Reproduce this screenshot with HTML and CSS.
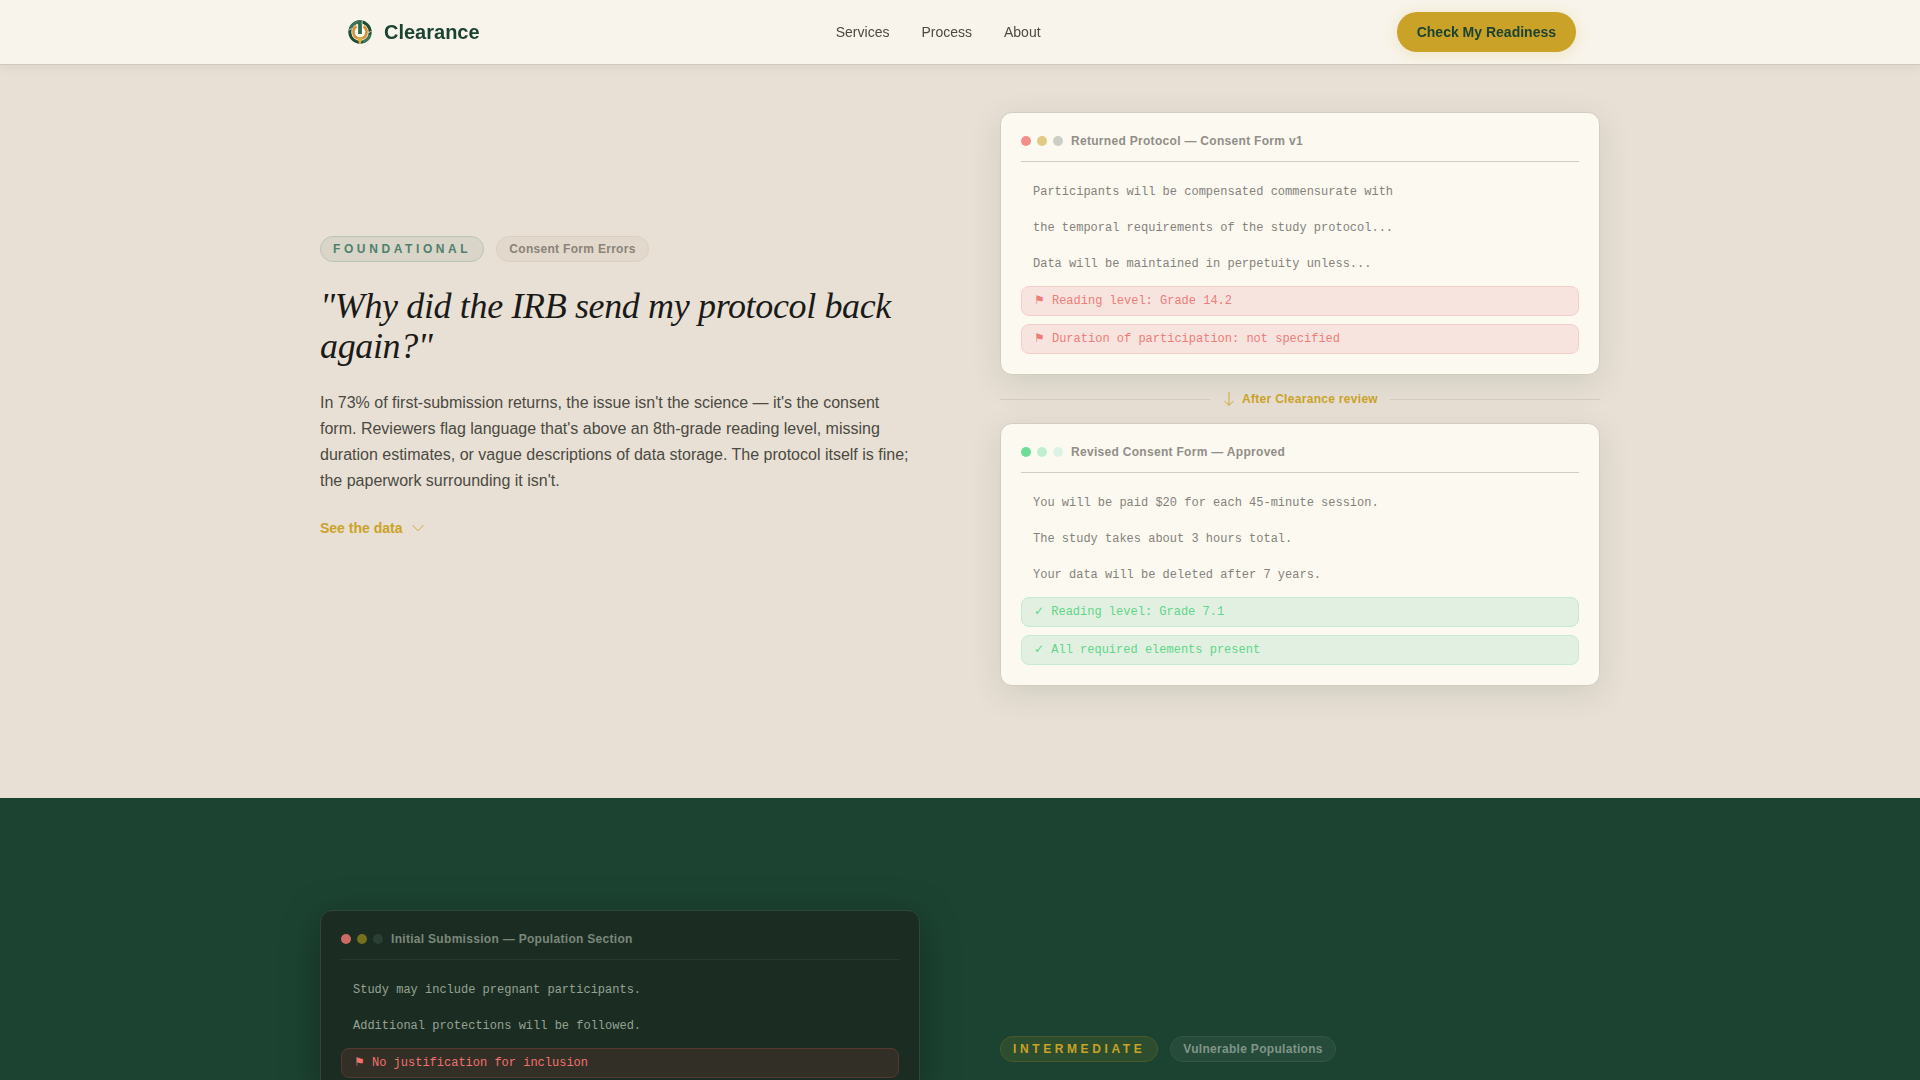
FILE: index.html
```html
<!DOCTYPE html>
<html lang="en">
<head>
<meta charset="utf-8">
<title>Clearance</title>
<link rel="stylesheet" href="styles.css">
</head>
<body>
<header class="nav">
  <div class="nav-inner">
    <a class="brand">
      <svg class="logo" viewBox="0 0 32 32" fill="none">
        <circle cx="16" cy="16" r="10.1" stroke="#1f4a34" stroke-width="3.2"/>
        <path d="M16.5 5.900A10.100 10.100 0 0 0 6.400 13M25.800 18.500A10.100 10.100 0 0 1 19 25.700" stroke="#3f7658" stroke-width="3.2"/>
        <circle cx="16" cy="16.200" r="8" stroke="#f3e3b6" stroke-width="1.2"/>
        <path d="M12.500 10.400A6.600 6.600 0 1 0 19.500 10.400" stroke="#d0913a" stroke-width="2.6"/>
        <path d="M13.200 21.500h5.600L16.600 28h-1.200z" fill="#e0ad4e"/>
        <circle cx="16" cy="16.300" r="4.600" fill="#fffaf0"/>
        <path d="M16 5.400v12.600" stroke="#2f694e" stroke-width="3.8"/>
        <path d="M4.500 14.200l3.400-1.500M27.500 15.200l-3.300 1.600M18.400 4.700l-.5 3.400" stroke="#f3ecd4" stroke-width=".8"/>
      </svg>
      <span class="brand-name">Clearance</span>
    </a>
    <nav class="links"><a>Services</a><a>Process</a><a>About</a></nav>
    <a class="cta">Check My Readiness</a>
  </div>
</header>

<section class="section light">
  <div class="grid">
    <div class="copy">
      <div class="badges">
        <span class="badge level">FOUNDATIONAL</span>
        <span class="badge topic">Consent Form Errors</span>
      </div>
      <h2 class="title">"Why did the IRB send my protocol back again?"</h2>
      <p class="text">In 73% of first-submission returns, the issue isn't the science — it's the consent form. Reviewers flag language that's above an 8th-grade reading level, missing duration estimates, or vague descriptions of data storage. The protocol itself is fine; the paperwork surrounding it isn't.</p>
      <a class="more">See the data
        <svg class="chevron" viewBox="0 0 14 14" fill="none" stroke="currentColor" stroke-width=".9"><path d="M1.5 4.2L7 9.7l5.500-5.500"/></svg>
      </a>
    </div>
    <div class="docs">
      <article class="card">
        <div class="card-head">
          <div class="dots"><i class="dot red"></i><i class="dot gold"></i><i class="dot gray"></i></div>
          <span class="card-title">Returned Protocol — Consent Form v1</span>
        </div>
        <div class="lines">
          <div class="line">Participants will be compensated commensurate with</div>
          <div class="line">the temporal requirements of the study protocol...</div>
          <div class="line">Data will be maintained in perpetuity unless...</div>
          <div class="line flag"><span class="mark">⚑</span> Reading level: Grade 14.2</div>
          <div class="line flag"><span class="mark">⚑</span> Duration of participation: not specified</div>
        </div>
      </article>
      <div class="divider">
        <span class="divider-label">
          <svg class="arrow" viewBox="0 0 14 14" fill="none" stroke="currentColor" stroke-width=".9"><path d="M7 0v13.300M2.500 9L7 13.300L11.500 9"/></svg>
          After Clearance review
        </span>
      </div>
      <article class="card">
        <div class="card-head">
          <div class="dots"><i class="dot green"></i><i class="dot green-mid"></i><i class="dot green-low"></i></div>
          <span class="card-title">Revised Consent Form — Approved</span>
        </div>
        <div class="lines">
          <div class="line">You will be paid $20 for each 45-minute session.</div>
          <div class="line">The study takes about 3 hours total.</div>
          <div class="line">Your data will be deleted after 7 years.</div>
          <div class="line pass"><span class="mark">✓</span> Reading level: Grade 7.1</div>
          <div class="line pass"><span class="mark">✓</span> All required elements present</div>
        </div>
      </article>
    </div>
  </div>
</section>

<section class="section dark">
  <div class="grid">
    <div class="docs">
      <article class="card">
        <div class="card-head">
          <div class="dots"><i class="dot red"></i><i class="dot gold"></i><i class="dot gray"></i></div>
          <span class="card-title">Initial Submission — Population Section</span>
        </div>
        <div class="lines">
          <div class="line">Study may include pregnant participants.</div>
          <div class="line">Additional protections will be followed.</div>
          <div class="line flag"><span class="mark">⚑</span> No justification for inclusion</div>
        </div>
      </article>
    </div>
    <div class="copy">
      <div class="badges">
        <span class="badge level">INTERMEDIATE</span>
        <span class="badge topic">Vulnerable Populations</span>
      </div>
    </div>
  </div>
</section>
</body>
</html>
```
FILE: styles.css
```css
* { box-sizing: border-box; }

body {
  margin: 0;
  height: 1080px;
  overflow: hidden;
  font-family: "Liberation Sans", Arial, sans-serif;
  color: #4a4a42;
  background: #e9e0d5;
}

/* Navigation */
.nav {
  position: fixed;
  inset: 0 0 auto;
  z-index: 10;
  height: 65px;
  background: #f8f4eb;
  border-bottom: 1px solid #d0cabe;
  box-shadow: 0 2px 10px rgba(28, 67, 50, .08);
}
.nav-inner {
  width: 1280px;
  height: 64px;
  margin: 0 auto;
  padding: 0 24px;
  display: flex;
  align-items: center;
  justify-content: space-between;
}
.brand { display: flex; align-items: center; gap: 8px; }
.logo { width: 32px; height: 32px; }
.brand-name { font-size: 20px; font-weight: 700; color: #1c4332; }
.links { display: flex; gap: 32px; font-size: 14px; color: #4a4a42; }
.cta {
  height: 40px;
  padding: 0 20px;
  border-radius: 20px;
  background: #c9a227;
  color: #1c4332;
  font-size: 14px;
  font-weight: 700;
  line-height: 40px;
  box-shadow: 0 2px 16px rgba(201, 162, 39, .2);
}

/* Sections */
.section { padding: 112px 0; }
.light { height: 798px; }
.dark { height: 282px; overflow: hidden; padding-bottom: 0; background: #1c4332; }
.grid {
  width: 1280px;
  margin: 0 auto;
  display: grid;
  grid-template-columns: 1fr 1fr;
  gap: 80px;
}
.copy { padding-top: 124px; }
.dark .copy { padding-top: 126px; }

.badges { display: flex; gap: 12px; }
.badge {
  height: 26px;
  padding: 0 12px;
  border: 1px solid;
  border-radius: 13px;
  font-size: 12px;
  font-weight: 700;
  line-height: 24px;
}
.level {
  letter-spacing: 3.6px;
  color: #4f806d;
  background: #d9d6c9;
  border-color: #b9c4b6;
}
.topic {
  letter-spacing: .3px;
  color: #8a8378;
  background: #e2d8cb;
  border-color: #dacfc2;
}
.dark .level { color: #c9a227; background: #2d4e2e; border-color: #4a5a2c; }
.dark .topic { color: #809588; background: #264b3b; border-color: #335646; }

.title {
  margin: 24px 0 0;
  font: italic 400 36px/40px "Liberation Serif", "Times New Roman", serif;
  letter-spacing: -.36px;
  color: #1a1a18;
}
.text { margin: 24px 0 0; font-size: 16px; line-height: 26px; }
.more {
  margin-top: 24px;
  display: flex;
  align-items: center;
  gap: 9px;
  font-size: 14px;
  font-weight: 700;
  line-height: 20px;
  color: #c9a227;
}
.chevron { width: 14px; height: 14px; }

/* Document cards */
.card {
  padding: 20px;
  border: 1px solid #d3cdc0;
  border-radius: 12px;
  background: #fcf9f1;
  box-shadow: 0 8px 32px rgba(28, 67, 50, .12);
}
.card-head {
  display: flex;
  align-items: center;
  gap: 8px;
  height: 29px;
  padding-bottom: 12px;
  border-bottom: 1px solid #d0cdc2;
}
.dots { display: flex; gap: 6px; }
.dot { width: 10px; height: 10px; border-radius: 50%; }
.red { background: #f28f88; }
.gold { background: #e0ca84; }
.gray { background: #cccdc5; }
.green { background: #6fdd98; }
.green-mid { background: #c0efd0; }
.green-low { background: #dcf3e1; }
.card-title {
  font-size: 12px;
  font-weight: 700;
  letter-spacing: .3px;
  color: #918e87;
}
.lines {
  margin-top: 16px;
  display: flex;
  flex-direction: column;
  gap: 8px;
  font: 12px/20px "Liberation Mono", "Courier New", monospace;
  color: #84827b;
}
.line { height: 28px; padding: 4px 12px; }
.flag, .pass { height: 30px; border: 1px solid; border-radius: 8px; }
.flag { color: #ee7c78; background: #f8e4df; border-color: #f3cdca; }
.pass { color: #5fd68a; background: #e2f0e1; border-color: #c5ebcf; }
.mark { font-family: "DejaVu Sans", sans-serif; line-height: 1; }

.divider {
  height: 48px;
  display: flex;
  align-items: center;
  gap: 12px;
}
.divider::before, .divider::after {
  content: "";
  flex: 1;
  height: 1px;
  background: #d3cabd;
}
.divider-label {
  display: flex;
  align-items: center;
  gap: 6px;
  font-size: 12px;
  font-weight: 700;
  letter-spacing: .3px;
  color: #c9a227;
}
.arrow { width: 14px; height: 14px; }

/* Dark variant */
.dark .card {
  background: #1b2d22;
  border-color: #304639;
  box-shadow: 0 8px 40px rgba(0, 0, 0, .3);
}
.dark .card-head { border-color: #263a2e; }
.dark .card-title { color: #7b877b; }
.dark .lines { color: #96a294; }
.dark .red { background: #cc6b66; }
.dark .gold { background: #77701f; }
.dark .gray { background: #2a4034; }
.dark .flag { color: #f4716f; background: #312f26; border-color: #573831; }
```
